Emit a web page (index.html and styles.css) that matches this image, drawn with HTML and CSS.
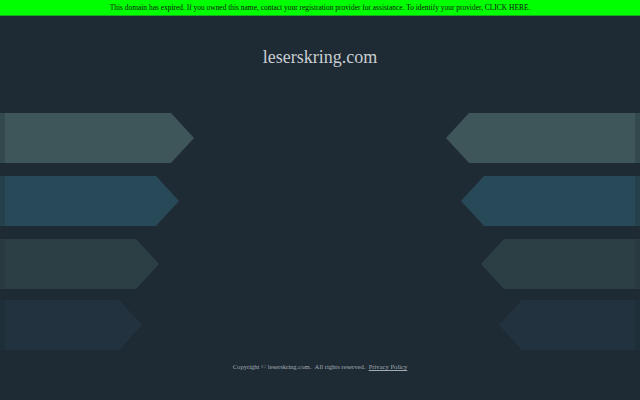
FILE: index.html
```html
<!DOCTYPE html>
<html>
<head>
<meta charset="utf-8">
<link rel="stylesheet" href="styles.css">
</head>
<body>
<div class="notice">This domain has expired. If you owned this name, contact your registration provider for assistance. To identify your provider, <a class="notice-link" href="#">CLICK HERE</a>.</div>
<h1 class="title">leserskring.com</h1>
<div class="arrows">
  <div class="col col-left">
    <div class="arrow a1 w1"></div>
    <div class="arrow a2 w2"></div>
    <div class="arrow a3 w3"></div>
    <div class="arrow a4 w4"></div>
  </div>
  <div class="col col-right">
    <div class="arrow a1 w1"></div>
    <div class="arrow a2 w2"></div>
    <div class="arrow a3 w3"></div>
    <div class="arrow a4 w4"></div>
  </div>
</div>
<div class="footer">Copyright © leserskring.com. &nbsp;All rights reserved. &nbsp;<a class="footer-link" href="#">Privacy Policy</a></div>
</body>
</html>
```
FILE: styles.css
```css
html, body {
  margin: 0;
  padding: 0;
}
body {
  width: 640px;
  height: 400px;
  overflow: hidden;
  background: #1e2a34;
  font-family: "Liberation Serif", "Times New Roman", serif;
}
.notice {
  height: 15px;
  background: #00ff00;
  border-bottom: 1px solid #17a81c;
  color: #111;
  font-size: 7.45px;
  line-height: 15px;
  text-align: center;
  white-space: nowrap;
}
.notice-link {
  color: #111;
  text-decoration: none;
}
.title {
  margin: 30px 0 0 0;
  height: 22px;
  font-weight: normal;
  font-size: 18px;
  line-height: 22px;
  color: #c9ced2;
  text-align: center;
}
.arrows {
  margin-top: 45px;
  display: flex;
  justify-content: space-between;
}
.col {
  display: flex;
  flex-direction: column;
  gap: 13px;
}
.col-left { align-items: flex-start; }
.col-right { align-items: flex-end; }
.arrow {
  height: 50px;
}
.arrow.a4 {
  margin-top: -2px;
}
.col-left .arrow {
  clip-path: polygon(0 0, calc(100% - 23px) 0, 100% 50%, calc(100% - 23px) 100%, 0 100%);
}
.col-right .arrow {
  clip-path: polygon(23px 0, 100% 0, 100% 100%, 23px 100%, 0 50%);
}
.w1 { width: 194px; }
.w2 { width: 179px; }
.w3 { width: 159px; }
.w4 { width: 142px; }
.col-right .w4 { width: 141px; }
.col-left .a1 { background: linear-gradient(to right, #34494d 0, #34494d 5px, #3e5659 5px); }
.col-left .a2 { background: linear-gradient(to right, #23404b 0, #23404b 5px, #284957 5px); }
.col-left .a3 { background: linear-gradient(to right, #283a40 0, #283a40 5px, #2c3f45 5px); }
.col-left .a4 { background: linear-gradient(to right, #1f2f3a 0, #1f2f3a 5px, #22333f 5px); }
.col-right .a1 { background: linear-gradient(to left, #34494d 0, #34494d 5px, #3e5659 5px); }
.col-right .a2 { background: linear-gradient(to left, #23404b 0, #23404b 5px, #284957 5px); }
.col-right .a3 { background: linear-gradient(to left, #283a40 0, #283a40 5px, #2c3f45 5px); }
.col-right .a4 { background: linear-gradient(to left, #1f2f3a 0, #1f2f3a 5px, #22333f 5px); }
.footer {
  margin-top: 12px;
  font-size: 6.6px;
  line-height: 10px;
  color: #a3abb2;
  text-align: center;
  white-space: nowrap;
}
.footer-link {
  color: #a3abb2;
  text-decoration: underline;
}
```
